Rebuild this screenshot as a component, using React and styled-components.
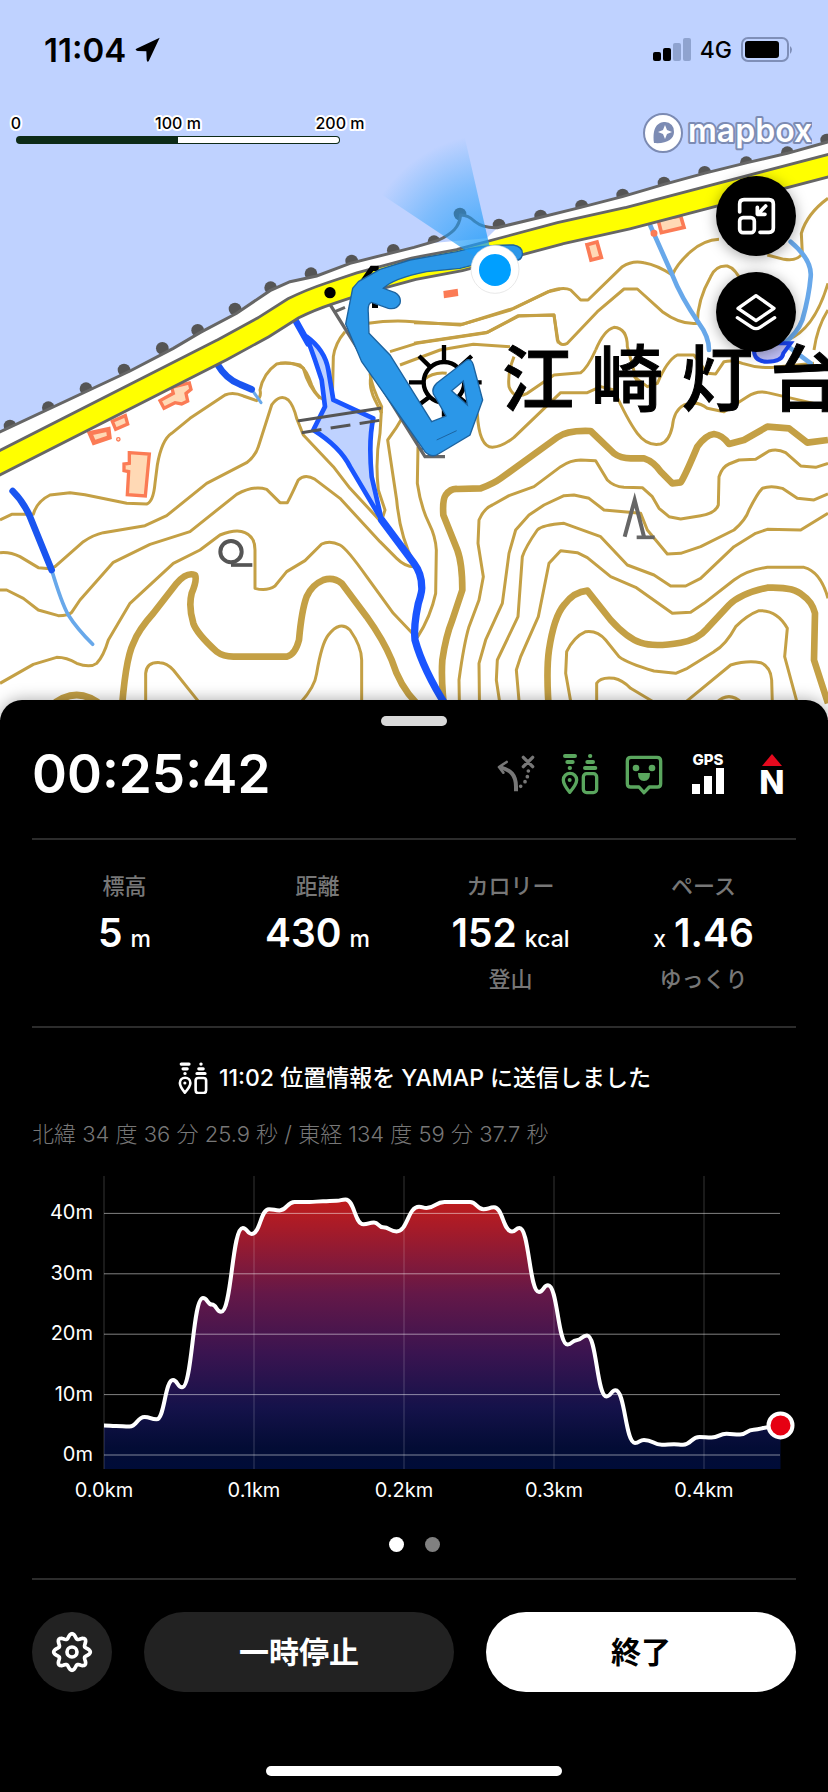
import React from "react";
import styled, { createGlobalStyle, css } from "styled-components";

const GlobalStyle = createGlobalStyle`
    * {
        box-sizing: border-box;
    }
    body {
        margin: 0;
        background: #000;
        font-family: Inter, "Noto Sans CJK JP", sans-serif;
        -webkit-font-smoothing: antialiased;
    }
`;

/* ---------- data ---------- */

const stats = [
    { id: 1, title: "標高", value: "5", unit: "m" },
    { id: 2, title: "距離", value: "430", unit: "m" },
    { id: 3, title: "カロリー", value: "152", unit: "kcal", note: "登山" },
    { id: 4, title: "ペース", value: "1.46", prefix: "x", note: "ゆっくり" },
];

// [distance in metres, elevation in metres]
const elevation = [
    [0, 4.9], [8, 4.8], [17, 4.7], [27, 6.3], [35, 5.9], [46, 12.4], [52, 11.2],
    [66, 26], [72, 24.9], [78, 23.7], [92.5, 37.6], [98.5, 36.6], [110, 40.7],
    [117, 40.5], [127, 41.9], [137, 41.9], [146, 42], [155, 42.1], [161, 42.3],
    [173, 38.2], [180, 38.5], [186, 37.7], [195, 37], [210, 41.1], [215, 40.9],
    [227, 41.9], [244, 41.9], [253, 40.7], [260, 41], [272, 37], [277, 37.6],
    [290, 27], [296, 28.1], [309, 18.3], [315, 19], [322, 19.8], [335, 9.7],
    [341, 10.7], [354, 2], [360, 2.5], [372, 1.7], [380, 1.8], [386, 1.7],
    [397, 3], [405, 2.9], [415, 3.5], [424, 3.4], [433, 4.2], [444, 4.6], [451, 4.9],
];

const tileOrigin = {
    nw: [0, 0],
    ne: [1242, 0],
    sw: [0, 1050],
    se: [1242, 1050],
    route: [840, 600],
};

const contours = {
    sw: [
        "M0 510 L35 493 L100 493 Q110 455 150 435 L210 428 L255 434 L380 460 L440 462 Q460 455 465 400 L472 345 Q485 270 515 250 L570 205 L675 135 Q700 125 730 138 L770 152 Q785 140 780 120 Q790 70 830 42 Q860 35 900 45 Q920 60 935 105 Q950 140 970 148",
        "M0 608 Q30 605 60 620 L115 653 L150 656 L165 650 L250 575 Q280 555 310 548 L435 527 L500 497 L620 400 L740 338 Q765 320 775 290 L815 165 Q840 130 865 150 Q880 165 890 205 L910 255 L1000 350 L1050 415 L1140 512",
        "M0 720 L20 720 L70 745 L115 780 L175 797 Q205 797 215 787 L240 750 L340 637 L450 583 L570 545 L710 433 Q760 405 800 418 L840 458 L862 458 Q870 445 895 390 Q915 370 945 388 L1020 445 L1140 575 L1190 625 Q1215 650 1242 650",
        "M0 1000 L100 943 L170 922 Q200 922 230 940 Q270 955 290 940 Q310 920 325 870 L390 760 L520 640 L600 600 L660 555 Q710 535 735 548 Q765 560 765 600 L765 715 Q800 725 825 708 L860 665 L915 632 L965 582 Q990 570 1020 585 Q1040 595 1100 680 L1180 790 L1242 855",
        "M437 1110 L437 970 Q440 935 480 938 Q500 938 520 960 L600 1060",
        "M900 1060 Q945 1010 950 970 Q965 880 985 855 Q1020 810 1050 840 Q1085 890 1085 930 L1085 1060",
        "M1110 70 Q1115 110 1145 170 L1140 250 Q1125 330 1135 420 L1155 480 L1145 512",
        "M1215 190 Q1190 235 1163 270 L1190 450 Q1200 560 1242 640",
    ],
    route: [
        "M0 490 Q40 485 70 505 Q85 560 120 595",
        "M157 600 L160 470 Q165 430 195 395",
        "M265 370 Q330 360 400 365 L540 375 L700 325 L805 275 L840 267",
        "M330 455 L410 430 L620 398 L715 347 L822 345 L835 430",
        "M360 495 L480 450 L580 433 L690 440",
        "M275 520 Q262 560 290 610 L305 640",
        "M430 540 Q460 515 500 520",
    ],
    ne: [
        "M0 968 L145 973 L290 930 L410 872 Q450 860 470 870 L500 900 L522 900 L625 800 Q655 780 690 788 Q730 795 775 825 Q790 790 830 755 Q870 720 915 718",
        "M0 1030 L220 997 L315 948 L420 945 L430 1020 Q440 1040 460 1030 L550 935 L630 867 L670 867 L745 935 Q800 975 850 970 Q850 900 890 830 Q905 795 940 798 Q965 805 985 850",
        "M545 1050 Q570 990 600 982 Q640 985 640 1040 L670 1150",
        "M1242 595 Q1180 640 1162 700 L1165 760 Q1150 785 1110 778 L1060 765",
        "M1242 850 Q1200 990 1120 1020",
        "M1242 930 Q1210 980 1200 1050",
    ],
    se: [
        "M300 20 Q280 70 285 110 Q300 150 340 130 L420 75 L500 68 Q520 55 545 0",
        "M190 190 Q195 290 235 292 Q265 290 300 262 L440 128 L520 128 L560 110 L600 120 Q640 210 670 250 Q700 290 740 282 Q765 275 775 230 Q780 180 810 165 Q850 150 880 175 L930 185 L1000 140 Q1030 120 1060 128 L1242 170",
        "M660 80 L700 110 L730 100 Q760 30 790 15 L840 15 L880 70 L905 72 L930 35 Q960 30 985 40 Q1030 55 1080 52 L1200 40",
        "M137 1110 L135 990 Q150 880 165 830 L195 750 L208 680 L192 580 L195 510 Q210 475 235 465 L285 437 L360 410 L440 350 Q470 330 500 330 L545 332 L580 390 Q600 410 630 412 L685 413 L715 440 L735 475 L765 500 L800 507 L860 497 Q905 490 913 465 L915 380 Q925 350 945 342 L975 330 L1025 328 L1065 303 Q1090 295 1115 308 L1160 348 L1205 352 L1242 340",
        "M197 1110 L195 940 L215 870 L265 760 L285 610 L305 540 L345 495 L390 465 L450 437 L480 435 L525 445 L570 480 L680 490 L700 540 L760 612 L800 610 L860 590 L960 540 Q995 510 1005 480 Q1030 430 1045 415 Q1070 405 1105 415 L1150 445 L1200 450 L1242 432",
        "M265 1110 L247 990 L250 930 L312 800 L325 620 Q335 590 370 540 Q385 525 450 520 L560 560 L640 645 L720 675 L770 708 L815 708 L860 685 L960 590 L1025 550 L1060 538 L1160 540 L1242 490",
        "M320 1110 L307 960 L320 920 L373 800 L405 640 L440 602 L490 608 L520 623 L590 680 L665 712 L775 790 L830 787 L870 760 L960 690 Q1000 660 1060 652 L1170 652 Q1220 665 1242 745",
        "M480 1110 L455 970 L458 905 Q480 860 515 845 Q550 840 575 870 L615 920 Q640 940 720 963 L785 970 L820 955 L900 905 Q935 885 965 830 Q1000 795 1035 782 Q1090 780 1120 835 L1112 920 L1150 1060",
        "M548 1060 L548 1000 Q560 980 600 985 Q625 990 650 1015 L725 1060",
        "M810 1060 L950 945 Q1000 930 1040 938 Q1070 950 1073 990 L1075 1060",
        "M905 1060 Q945 1020 985 1060",
        "M12 290 L10 400 Q20 470 45 520 Q65 560 67 600 L65 730 Q50 800 10 862",
    ],
};

const indexContours = {
    sw: [
        "M363 1110 Q375 930 400 880 Q415 840 460 790 L530 700 Q560 665 585 675 Q592 690 575 730 Q565 770 580 820 Q590 850 650 905 Q670 920 700 920 L860 920 Q885 915 897 870 Q905 780 920 740 Q935 705 970 690 Q1000 680 1025 700 L1100 800 Q1150 870 1175 930 Q1200 1010 1250 1060",
        "M150 1070 Q230 1000 310 1070",
    ],
    se: [
        "M95 1110 Q80 1000 85 930 Q95 860 115 810 L145 720 Q145 640 130 600 L88 495 Q85 450 95 435 Q110 415 130 417 L200 415 Q240 400 260 385 L430 262 Q460 240 530 243 L600 310 Q620 325 650 325 L690 325 Q720 335 740 365 L775 400 L800 397 Q810 385 850 290 Q875 255 900 252 Q925 255 945 282 L990 270 L1060 230 L1125 235 L1180 278 L1242 270",
        "M407 1110 Q395 970 405 900 Q420 800 450 765 Q480 725 520 722 L590 810 Q640 865 680 878 Q720 892 800 878 Q850 870 880 835 L945 765 Q980 730 1060 713 Q1140 710 1165 735 Q1195 755 1203 790 L1200 930 L1242 1060",
    ],
};

const seawallPosts = [
    [30, 1278], [145, 1223], [258, 1166], [372, 1110], [487, 1045], [593, 991],
    [705, 927], [812, 863], [933, 821], [1055, 783], [1180, 751], [1302, 725],
    [1380, 642], [1497, 675], [1622, 648], [1745, 618], [1868, 585], [1992, 549],
    [2114, 517], [2239, 488], [2362, 458], [2480, 420],
];

const coast =
    "M-20 1305 L390 1113 L520 1045 L600 998 L710 940 L810 872 L870 845 L950 828 L1050 790 L1170 760 L1242 742 L1312 722 C1360 700 1378 680 1382 645 Q1405 645 1425 665 Q1450 685 1492 683 L1622 652 L1742 622 L1867 590 L1992 553 L2112 520 L2242 488 L2362 460 L2504 420";

const road =
    "M-40 1408 L665 1050 L790 982 L880 925 Q930 900 990 880 L1080 850 L1242 806 L1380 780 L1680 700 L1882 655 L2504 492";

/* ---------- map ---------- */

function Tile({ at, children }) {
    return <g transform={`translate(${tileOrigin[at].join(" ")})`}>{children}</g>;
}

function ContourLayer({ lines, width }) {
    return (
        <g fill="none" stroke="#c4a045" strokeWidth={width} strokeLinejoin="round">
            {Object.keys(lines).map((tile) => (
                <Tile key={tile} at={tile}>
                    {lines[tile].map((d) => <path key={d} d={d} />)}
                </Tile>
            ))}
        </g>
    );
}

function MapCanvas() {
    return (
        <MapSvg viewBox="0 0 828 720" preserveAspectRatio="xMidYMin slice" aria-hidden="true">
            <defs>
                <radialGradient id="heading" gradientUnits="userSpaceOnUse" cx="1485" cy="810" r="430">
                    <stop offset="0.2" stopColor="#1d9bf8" stopOpacity="0.75" />
                    <stop offset="0.6" stopColor="#1d9bf8" stopOpacity="0.4" />
                    <stop offset="0.95" stopColor="#1d9bf8" stopOpacity="0" />
                </radialGradient>
            </defs>
            <rect width="828" height="720" fill="#bfd2ff" />
            <g transform="scale(0.33333)">
                {seawallPosts.map(([x, y]) => <circle key={x} cx={x} cy={y} r="19" fill="#555" />)}
                <path d={`${coast} V2180 H-20 Z`} fill="#fff" />
                <path d="M1290 730 C1360 700 1378 680 1382 645 Q1405 645 1425 665 Q1450 685 1492 683 L1460 715 Z" fill="#bfd2ff" />
                <path d={coast} fill="none" stroke="#666" strokeWidth="9" />
                <ContourLayer lines={contours} width={9} />
                <ContourLayer lines={indexContours} width={20} />

                <Tile at="sw">
                    <g fill="none" strokeLinecap="round" strokeLinejoin="round">
                        <path d="M155 660 Q185 760 205 795 Q230 835 278 883" stroke="#68a8ea" strokeWidth="11" />
                        <path d="M38 423 Q70 455 90 500 L155 660" stroke="#1a55f0" strokeWidth="20" />
                        <path d="M755 118 L783 158" stroke="#68a8ea" strokeWidth="9" />
                        <path d="M650 40 Q680 90 720 103 L755 118" stroke="#1a55f0" strokeWidth="20" />
                        <path d="M880 -100 L925 -20" stroke="#1a55ff" strokeWidth="20" />
                        <path
                            d="M920 -40 Q975 0 985 60 L1000 150 L1120 205 Q1105 270 1115 380 L1145 510 L1050 350 Q1020 290 940 240 L975 170 L965 90 L945 30 Z"
                            fill="#bfd2ff" stroke="#1a55ff" strokeWidth="14"
                        />
                        <path d="M1145 510 L1242 640 Q1265 670 1265 710 Q1268 720 1255 760 Q1240 830 1245 870 Q1270 960 1340 1070" stroke="#1a55ff" strokeWidth="22" />
                        <path d="M897 212 L1140 175" stroke="#555" strokeWidth="9" />
                        <path d="M905 248 L1145 210" stroke="#555" strokeWidth="9" strokeDasharray="60 28" strokeLinecap="butt" />
                    </g>
                    <g fill="#ffd9b5" stroke="#fb7b55" strokeWidth="10">
                        <path d="M388 308 L448 312 L436 438 L382 434 L386 365 L372 362 L372 342 L388 340 Z" />
                        <path d="M270 250 L325 238 L328 262 L282 278 Z" strokeWidth="14" />
                        <path d="M337 214 L376 197 L383 222 L347 238 Z" />
                        <path d="M480 152 L520 130 L515 112 L568 99 L573 118 L558 130 L563 153 L545 162 L525 158 L492 175 Z" />
                        <circle cx="355" cy="268" r="2" />
                    </g>
                    <circle cx="693" cy="605" r="32" fill="#fff" stroke="#555" strokeWidth="12" />
                    <path d="M693 645 H757" stroke="#555" strokeWidth="11" />
                </Tile>

                <Tile at="ne">
                    <g fill="none" stroke="#68a8ea" strokeWidth="14" strokeLinecap="round">
                        <path d="M705 668 L775 825 Q800 890 855 970 Q885 1010 885 1050" />
                        <path d="M1130 725 Q1195 780 1190 830 Q1185 890 1165 960 Q1150 1000 1110 1030 L1190 1090" />
                    </g>
                    <path d="M1020 1050 Q1020 1085 1060 1085 Q1105 1085 1108 1060 L1130 1030 L1030 1030 Z" fill="#bfbff5" stroke="#1a44ee" strokeWidth="12" />
                    <g fill="#ffd9b5" stroke="#fb7b55" strokeWidth="11">
                        <path d="M732 658 L800 648 L810 682 L742 698 Z" />
                        <path d="M519 734 L549 726 L562 772 L531 780 Z" />
                        <circle cx="720" cy="700" r="5" />
                    </g>
                    <path d="M88 873 L131 866 L133 888 L90 895 Z" fill="#fb7b55" />
                </Tile>

                <path d={road} fill="none" stroke="#666" strokeWidth="74" />
                <path d={road} fill="none" stroke="#ff0" strokeWidth="57" />

                <Tile at="se">
                    <path d="M632 560 L662 450 L690 560" fill="none" stroke="#666" strokeWidth="12" />
                    <path d="M668 562 H722" stroke="#666" strokeWidth="11" />
                </Tile>
            </g>

            <PlaceName x="502 591 681 770" y="405">江崎灯台</PlaceName>

            <g transform="scale(0.33333)">
                <Tile at="route">
                    <path d="M150 313 L285 530 L435 770 H495" fill="none" stroke="#666" strokeWidth="10" />
                    <path d="M340 590 L440 755" fill="none" stroke="#666" strokeWidth="26" strokeDasharray="7 18" />
                    <path d="M165 335 L195 322" stroke="#666" strokeWidth="9" />
                    <path d="M248 245 L276 205 H296" fill="none" stroke="#000" strokeWidth="16" />
                    <path d="M276 316 H294" stroke="#000" strokeWidth="16" />
                    <circle cx="150" cy="278" r="17" />
                    <g fill="none" stroke="#000" strokeWidth="13">
                        <circle cx="492" cy="547" r="61" />
                        <path d="M492 435 V486 M417 468 L449 499 M387 547 H431 M575 468 L540 500 M605 547 H555 M420 612 L449 590 M492 650 V608 M535 590 L560 610" />
                    </g>
                    <path
                        d="M235 245 L300 208 L390 180 L530 155 Q600 135 700 135 Q730 140 727 165 Q722 185 700 180 L600 190 L540 205 L440 215 Q340 235 310 265 L345 278 Q365 290 360 310 Q350 330 325 325 L275 307 Q262 310 265 340 L267 400 L330 465 L455 665 L498 648 L465 590 Q450 570 470 550 L560 480 Q575 475 580 495 L608 600 L570 705 L475 762 Q455 775 435 755 L245 485 L197 372 L218 265 Z M515 572 L550 543 L562 615 Z"
                        fill="#2b97e8" stroke="#1c63a0" strokeWidth="4" fillRule="evenodd"
                    />
                    <path d="M470 720 L530 692" stroke="#1c63a0" strokeWidth="3" />
                </Tile>
                <path d="M1485 810 L1110 560 Q1220 430 1388 385 Z" fill="url(#heading)" />
                <circle cx="1485" cy="808" r="72" fill="#fff" stroke="#ddd" strokeWidth="2" />
                <circle cx="1485" cy="810" r="48" fill="#009fff" />
            </g>
        </MapSvg>
    );
}

function StatusBar() {
    return (
        <StatusRow>
            <Clock>
                11:04
                <svg width="26" height="26" viewBox="400 112 78 78" aria-hidden="true">
                    <path d="M404 147 L474 114 L441 185 Q436 189 435 180 L434 155 L408 154 Q398 151 404 147 Z" />
                </svg>
            </Clock>
            <Network>
                <svg width="38" height="24" viewBox="0 0 38 24" aria-hidden="true">
                    <rect x="0" y="14" width="8" height="9" rx="2" />
                    <rect x="10" y="10" width="8" height="13" rx="2" />
                    <rect x="20" y="5" width="8" height="18" rx="2" fill="#8fa3cf" />
                    <rect x="30" y="0" width="8" height="23" rx="2" fill="#8fa3cf" />
                </svg>
                <span>4G</span>
                <svg width="53" height="26" viewBox="0 0 53 26" aria-hidden="true">
                    <rect x="1" y="1" width="46" height="23" rx="6" fill="none" stroke="#7f8fb8" strokeWidth="2" />
                    <rect x="4" y="4" width="34" height="17" rx="3" />
                    <path d="M49 9 Q53 12 49 17 Z" fill="#7f8fb8" />
                </svg>
            </Network>
        </StatusRow>
    );
}

function ScaleBar() {
    return (
        <svg width="370" height="34" viewBox="0 0 370 34" role="img" aria-label="縮尺 200 m">
            <ScaleLabel x="16" y="15">0</ScaleLabel>
            <ScaleLabel x="178" y="15">100 m</ScaleLabel>
            <ScaleLabel x="340" y="15">200 m</ScaleLabel>
            <rect x="16" y="22" width="324" height="8" rx="4" fill="#0d2b17" />
            <path d="M178 23 H336 A3 3 0 0 1 336 29 H178 Z" fill="#fff" />
        </svg>
    );
}

function MapboxLogo() {
    return (
        <a href="#mapbox" aria-label="mapbox">
            <svg width="172" height="44" viewBox="0 0 172 44">
                <circle cx="23" cy="22" r="19" fill="#fff" stroke="#7c8bb3" strokeWidth="2" />
                <path d="M14 32 C12 16 18 11 25 11 A9 9 0 0 1 34 21 C34 28 27 33 14 32 Z" fill="#7c8bb3" />
                <path d="M25 14 L27 19 L32 21 L27 23 L25 28 L23 23 L18 21 L23 19 Z" fill="#fff" />
                <LogoText x="48" y="31">mapbox</LogoText>
            </svg>
        </a>
    );
}

/* ---------- icons ---------- */

function ShrinkIcon() {
    return (
        <svg width="80" height="80" viewBox="906 528 240 240" fill="none" stroke="#fff" strokeWidth="11" strokeLinecap="round" strokeLinejoin="round" aria-hidden="true">
            <path d="M977 636 V612 Q977 599 990 599 H1065 Q1078 599 1078 612 V684 Q1078 697 1065 697 H1038" />
            <rect x="977" y="653" width="44" height="45" rx="10" />
            <path d="M1055 618 L1034 640 M1030 622 V643 H1053" />
        </svg>
    );
}

function LayersIcon() {
    return (
        <svg width="80" height="80" viewBox="906 816 240 240" fill="none" stroke="#fff" strokeWidth="10" strokeLinecap="round" strokeLinejoin="round" aria-hidden="true">
            <path d="M1026 887 L1080 925 L1026 962 L972 925 Z" />
            <path d="M970 953 L1014 982 Q1026 990 1038 982 L1082 953" />
        </svg>
    );
}

function DetourIcon() {
    return (
        <svg width="48" height="48" viewBox="234 180 144 144" fill="none" stroke="#777" strokeLinecap="round" strokeLinejoin="round" role="img" aria-label="ルート外れ警告">
            <path d="M306 304 V290 C306 255 290 240 260 232" strokeWidth="12" strokeLinecap="butt" />
            <path d="M278 216 L255 231 L268 248" strokeWidth="8" />
            <path d="M320 289 h.1 M333 275 h.1 M340 260 h.1 M343 243 h.1" strokeWidth="11" />
            <path d="M328 202 L356 230 M356 202 L328 230" strokeWidth="10" />
        </svg>
    );
}

function WatchIcon({ size, color, box = "426 180 144 144" }) {
    return (
        <svg width={size} height={size} viewBox={box} fill="none" stroke={color} strokeWidth="10" strokeLinecap="round" strokeLinejoin="round" role="img" aria-label="みまもり">
            <path d="M453 198 H483 M460 216 H476 M467 234 h1 M528 198 h1 M520 216 H537 M513 234 H544" strokeWidth="12" />
            <path d="M467 307 C455 292 448 282 448 270 A20 20 0 0 1 488 270 C488 282 480 292 467 307 Z" />
            <circle cx="467" cy="270" r="3" strokeWidth="6" />
            <rect x="508" y="251" width="40" height="57" rx="10" />
        </svg>
    );
}

function FaceIcon() {
    return (
        <svg width="48" height="48" viewBox="618 180 144 144" fill="#5aa65e" role="img" aria-label="フィールドメモ">
            <path d="M651 202 H729 Q740 202 740 213 V281 Q740 291 730 291 H706 L690 308 L675 291 H650 Q640 291 640 281 V213 Q640 202 651 202 Z" fill="none" stroke="#5aa65e" strokeWidth="10" strokeLinejoin="round" />
            <circle cx="666" cy="234" r="10" />
            <circle cx="714" cy="234" r="10" />
            <path d="M672 249 H708 Q708 273 690 273 Q672 273 672 249 Z" />
        </svg>
    );
}

function GpsIcon() {
    return (
        <svg width="48" height="48" viewBox="0 0 48 48" fill="#fff" overflow="visible" aria-hidden="true">
            <IconText x="24" y="15" $size={15}>GPS</IconText>
            <rect x="8" y="34" width="8" height="10" />
            <rect x="20" y="26" width="8" height="18" />
            <rect x="32" y="18" width="8" height="26" />
        </svg>
    );
}

function NorthIcon() {
    return (
        <svg width="48" height="48" viewBox="0 0 48 48" fill="#fff" overflow="visible" aria-hidden="true">
            <path d="M14 16 L24 4 L34 16 Z" fill="#e60a1e" />
            <IconText x="24" y="44" $size={33}>N</IconText>
        </svg>
    );
}

function GearIcon() {
    const points = [];
    for (let i = 0; i < 96; i++) {
        const angle = (i / 96) * Math.PI * 2;
        const r = 48 + 7 * Math.cos(angle * 8);
        points.push(`${(Math.sin(angle) * r).toFixed(1)},${(Math.cos(angle) * r).toFixed(1)}`);
    }
    return (
        <svg width="80" height="80" viewBox="-120 -120 240 240" fill="none" stroke="#fff" strokeWidth="11" strokeLinejoin="round" aria-hidden="true">
            <polygon points={points.join(" ")} />
            <circle r="15" />
        </svg>
    );
}

/* ---------- elevation chart ---------- */

const toX = (m) => 104 + m * 1.5;
const toY = (m) => 295 - m * 6.04;

function ElevationChart() {
    const line = elevation
        .map(([d, h], i) => {
            const x = toX(d);
            const y = toY(h);
            if (i === 0) return `M${x} ${y}`;
            const px = toX(elevation[i - 1][0]);
            const py = toY(elevation[i - 1][1]);
            const mid = (px + x) / 2;
            return `C${mid} ${py} ${mid} ${y} ${x} ${y}`;
        })
        .join(" ");
    const [lastD, lastH] = elevation[elevation.length - 1];

    return (
        <ChartSvg viewBox="0 0 828 360" role="img" aria-label="標高グラフ">
            <defs>
                <linearGradient id="altitude" x1="0" y1="0" x2="0" y2="1">
                    <stop offset="0" stopColor="#c01c1c" />
                    <stop offset="0.1" stopColor="#a81b28" />
                    <stop offset="0.35" stopColor="#641848" />
                    <stop offset="0.57" stopColor="#3a1450" />
                    <stop offset="0.77" stopColor="#15124a" />
                    <stop offset="0.92" stopColor="#030c35" />
                    <stop offset="1" stopColor="#000c38" />
                </linearGradient>
            </defs>
            <path d={`${line} V309 H104 Z`} fill="url(#altitude)" />
            {[0, 100, 200, 300, 400].map((d) => (
                <g key={d}>
                    <line x1={toX(d)} x2={toX(d)} y1="16" y2="309" stroke="#fff" strokeOpacity="0.1" strokeWidth="2" />
                    <AxisText x={toX(d)} y="337" $anchor="middle">{(d / 1000).toFixed(1)}km</AxisText>
                </g>
            ))}
            {[0, 10, 20, 30, 40].map((h) => (
                <g key={h}>
                    <line x1="104" x2="780" y1={toY(h)} y2={toY(h)} stroke="#fff" strokeOpacity="0.5" />
                    <AxisText x="93" y={toY(h) + 6} $anchor="end">{h}m</AxisText>
                </g>
            ))}
            <path d={line} fill="none" stroke="#fff" strokeWidth="4" strokeLinejoin="round" />
            <circle cx={toX(lastD)} cy={toY(lastH)} r="12" fill="#e60012" stroke="#fff" strokeWidth="4" />
        </ChartSvg>
    );
}

/* ---------- screen ---------- */

export default function App() {
    return (
        <Screen>
            <GlobalStyle />
            <MapArea>
                <MapCanvas />
                <MapOverlay>
                    <StatusBar />
                    <MapTools>
                        <ScaleBar />
                        <MapboxLogo />
                    </MapTools>
                    <MapButtons>
                        <RoundButton type="button" aria-label="地図を縮小"><ShrinkIcon /></RoundButton>
                        <RoundButton type="button" aria-label="レイヤー"><LayersIcon /></RoundButton>
                    </MapButtons>
                </MapOverlay>
            </MapArea>

            <Sheet>
                <Handle />
                <TimerRow>
                    <Timer>00:25:42</Timer>
                    <Indicators>
                        <DetourIcon />
                        <WatchIcon size={48} color="#5aa65e" />
                        <FaceIcon />
                        <GpsIcon />
                        <NorthIcon />
                    </Indicators>
                </TimerRow>

                <Stats>
                    {stats.map((item) => (
                        <Stat key={item.id}>
                            <StatText>{item.title}</StatText>
                            <StatValue>
                                {item.prefix && <small>{item.prefix}</small>}
                                {item.value}
                                {item.unit && <small>{item.unit}</small>}
                            </StatValue>
                            <StatText>{item.note}</StatText>
                        </Stat>
                    ))}
                </Stats>

                <Message>
                    <WatchIcon size={32} color="#fff" box="437 190 122 122" />
                    11:02 位置情報を YAMAP に送信しました
                </Message>
                <Position>北緯 34 度 36 分 25.9 秒 / 東経 134 度 59 分 37.7 秒</Position>

                <ElevationChart />

                <Dots>
                    <Dot $active />
                    <Dot />
                </Dots>

                <Actions>
                    <RoundButton type="button" $dark aria-label="設定"><GearIcon /></RoundButton>
                    <PillButton type="button">一時停止</PillButton>
                    <PillButton type="button" $primary>終了</PillButton>
                </Actions>
                <HomeBar />
            </Sheet>
        </Screen>
    );
}

const Screen = styled.main`
    display: flex;
    flex-direction: column;
    min-height: 100vh;
    overflow: hidden;
`;

const MapArea = styled.section`
    position: relative;
    height: 720px;
    overflow: hidden;
`;

const MapSvg = styled.svg`
    position: absolute;
    inset: 0;
    width: 100%;
    height: 100%;
`;

const PlaceName = styled.text`
    font-family: "Noto Sans CJK JP", sans-serif;
    font-size: 72px;
    font-weight: 500;
    fill: #000;
    stroke: #000;
    stroke-width: 1px;
`;

const MapOverlay = styled.div`
    position: relative;
    display: flex;
    flex-direction: column;
`;

const StatusRow = styled.header`
    display: flex;
    align-items: center;
    justify-content: space-between;
    height: 100px;
    padding: 0 34px 0 44px;
`;

const Clock = styled.div`
    display: flex;
    align-items: center;
    gap: 9px;
    font-size: 33px;
    font-weight: 600;
`;

const Network = styled.div`
    display: flex;
    align-items: center;
    gap: 9px;
    font-size: 23px;
    font-weight: 500;
`;

const MapTools = styled.div`
    display: flex;
    align-items: flex-start;
    justify-content: space-between;
    padding: 11px 16px 0 0;
    height: 76px;

    svg {
        display: block;
    }
    > svg {
        margin-top: 3px;
    }
`;

const ScaleLabel = styled.text`
    font-size: 16px;
    font-weight: 500;
    text-anchor: middle;
    fill: #000;
    stroke: #fff;
    stroke-width: 4px;
    stroke-linejoin: round;
    paint-order: stroke;
`;

const LogoText = styled.text`
    font-size: 32px;
    font-weight: 600;
    fill: #fff;
    stroke: #7c8bb3;
    stroke-width: 4px;
    stroke-linejoin: round;
    paint-order: stroke;
`;

const MapButtons = styled.div`
    display: flex;
    flex-direction: column;
    align-items: flex-end;
    gap: 16px;
    padding-right: 32px;
`;

const RoundButton = styled.button`
    flex: none;
    width: 80px;
    height: 80px;
    padding: 0;
    border: 0;
    border-radius: 50%;
    background: ${(p) => (p.$dark ? "#222" : "#000")};
    ${(p) =>
        !p.$dark &&
        css`
            box-shadow: 0 2px 14px rgba(0, 0, 0, 0.35);
        `}

    svg {
        display: block;
    }
`;

const Sheet = styled.section`
    position: relative;
    flex: 1;
    display: flex;
    flex-direction: column;
    margin-top: -20px;
    padding: 16px 32px;
    border-radius: 22px 22px 0 0;
    background: #000;
    color: #fff;
    box-shadow: 0 0 16px rgba(0, 0, 0, 0.35);
`;

const Handle = styled.div`
    align-self: center;
    width: 66px;
    height: 10px;
    border-radius: 5px;
    background: #d9d9d9;
`;

const TimerRow = styled.div`
    display: flex;
    align-items: center;
    justify-content: space-between;
    height: 114px;
    padding-bottom: 16px;
    border-bottom: 2px solid #2c2c2c;
`;

const Timer = styled.h1`
    margin: 0;
    font-size: 53px;
    font-weight: 600;
    line-height: 64px;
`;

const Indicators = styled.div`
    display: flex;
    gap: 16px;
`;

const IconText = styled.text`
    font-size: ${(p) => p.$size}px;
    font-weight: 800;
    text-anchor: middle;
`;

const Stats = styled.div`
    display: grid;
    grid-template-columns: repeat(4, 1fr);
    column-gap: 8px;
    height: 188px;
    padding-top: 30px;
    border-bottom: 2px solid #2c2c2c;
`;

const Stat = styled.div`
    display: flex;
    flex-direction: column;
    align-items: center;
`;

const StatText = styled.div`
    height: 32px;
    font-size: 22px;
    font-weight: 500;
    line-height: 32px;
    color: #777;
`;

const StatValue = styled.div`
    display: flex;
    align-items: baseline;
    gap: 8px;
    height: 61px;
    font-size: 39px;
    font-weight: 600;
    line-height: 62px;

    small {
        font-size: 23px;
        font-weight: 500;
    }
`;

const Message = styled.p`
    display: flex;
    align-items: center;
    justify-content: center;
    gap: 10px;
    margin: 34px 0 0;
    font-size: 23px;
    font-weight: 500;
    line-height: 32px;
`;

const Position = styled.p`
    margin: 24px 0 10px;
    font-size: 22px;
    font-weight: 300;
    line-height: 32px;
    color: #777;
`;

const ChartSvg = styled.svg`
    display: block;
    width: calc(100% + 64px);
    margin: 0 -32px;
`;

const AxisText = styled.text`
    font-size: 20px;
    fill: #fff;
    text-anchor: ${(p) => p.$anchor};
`;

const Dots = styled.div`
    display: flex;
    justify-content: center;
    gap: 21px;
    padding: 17px 0 26px;
    border-bottom: 2px solid #2c2c2c;
`;

const Dot = styled.span`
    width: 15px;
    height: 15px;
    border-radius: 50%;
    background: ${(p) => (p.$active ? "#fff" : "#808080")};
`;

const Actions = styled.div`
    display: flex;
    gap: 32px;
    padding: 32px 0;
`;

const PillButton = styled.button`
    flex: 1;
    height: 80px;
    padding: 0 0 4px;
    border: 0;
    border-radius: 40px;
    background: ${(p) => (p.$primary ? "#fff" : "#222")};
    color: ${(p) => (p.$primary ? "#000" : "#fff")};
    font-family: inherit;
    font-size: 30px;
    font-weight: 700;
`;

const HomeBar = styled.div`
    align-self: center;
    width: 296px;
    height: 10px;
    margin-top: auto;
    border-radius: 5px;
    background: #fff;
`;
